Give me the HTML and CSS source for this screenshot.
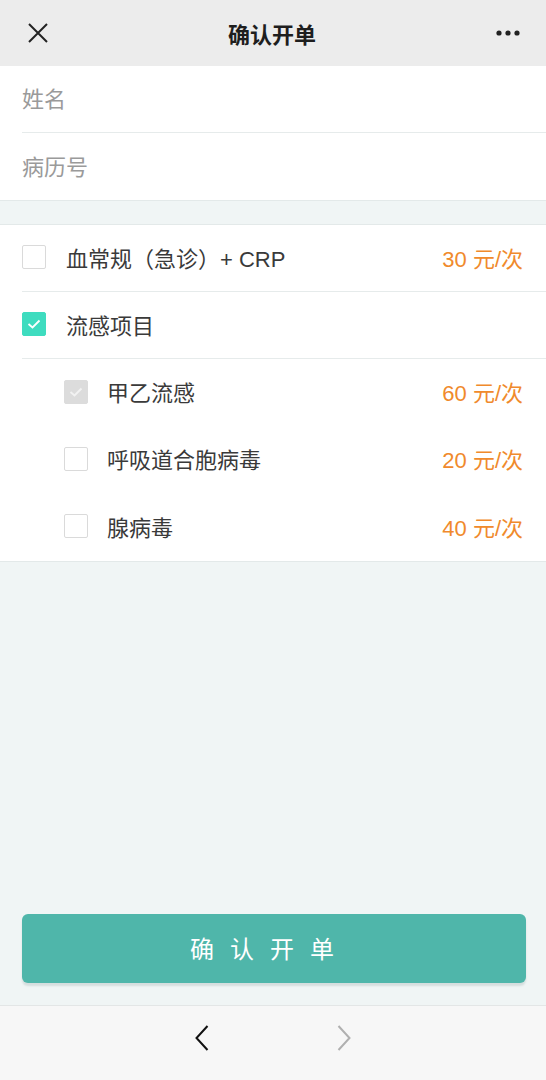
FILE: index.html
```html
<!DOCTYPE html>
<html lang="zh">
<head>
<meta charset="utf-8">
<title>确认开单</title>
<link rel="stylesheet" href="styles.css">
</head>
<body>
<div class="page">
  <header class="topbar">
    <svg class="icon-close" width="20" height="20" viewBox="0 0 20 20"><path d="M1 1 L19 19 M19 1 L1 19" stroke="#222" stroke-width="2" fill="none"/></svg>
    <div class="title">确认开单</div>
    <svg class="icon-more" width="24" height="6" viewBox="0 0 24 6"><circle cx="3" cy="3" r="2.6" fill="#222"/><circle cx="12" cy="3" r="2.6" fill="#222"/><circle cx="21" cy="3" r="2.6" fill="#222"/></svg>
  </header>

  <section class="form">
    <div class="row"><div class="row-inner"><span class="label">姓名</span></div></div>
    <div class="row"><div class="row-inner last"><span class="label">病历号</span></div></div>
  </section>

  <div class="gap"></div>

  <section class="list">
    <div class="row"><div class="row-inner">
      <span class="cb"></span>
      <span class="name">血常规（急诊）+ CRP</span>
      <span class="price">30 元/次</span>
    </div></div>
    <div class="row"><div class="row-inner">
      <span class="cb on"><svg width="14" height="10" viewBox="0 0 14 10"><path d="M1.5 5 L5.5 8.5 L12.5 1.5" stroke="#fff" stroke-width="1.8" fill="none"/></svg></span>
      <span class="name">流感项目</span>
    </div></div>
    <div class="row sub"><div class="row-inner last">
      <span class="cb dis"><svg width="14" height="10" viewBox="0 0 14 10"><path d="M1.5 5 L5.5 8.5 L12.5 1.5" stroke="#f2f2f2" stroke-width="1.8" fill="none"/></svg></span>
      <span class="name">甲乙流感</span>
      <span class="price">60 元/次</span>
    </div></div>
    <div class="row sub"><div class="row-inner last">
      <span class="cb"></span>
      <span class="name">呼吸道合胞病毒</span>
      <span class="price">20 元/次</span>
    </div></div>
    <div class="row sub"><div class="row-inner last">
      <span class="cb"></span>
      <span class="name">腺病毒</span>
      <span class="price">40 元/次</span>
    </div></div>
  </section>

  <div class="spacer"></div>

  <div class="action">
    <button class="btn">确认开单</button>
  </div>

  <nav class="navbar">
    <svg width="14" height="26" viewBox="0 0 14 26"><path d="M12.5 1 L1.5 13 L12.5 25" stroke="#111" stroke-width="2" fill="none"/></svg>
    <svg width="14" height="26" viewBox="0 0 14 26"><path d="M1.5 1 L12.5 13 L1.5 25" stroke="#b0b0b0" stroke-width="2" fill="none"/></svg>
  </nav>
</div>
</body>
</html>
```

FILE: styles.css
```css
* { box-sizing: border-box; }
html, body { margin: 0; padding: 0; }
body {
  background: #f0f5f5;
  font-family: "Liberation Sans", "Noto Sans CJK SC", sans-serif;
  color: #333;
}
.page {
  width: 546px;
  height: 1080px;
  display: flex;
  flex-direction: column;
}
.topbar {
  height: 66px;
  flex: none;
  background: #ececec;
  display: flex;
  align-items: center;
  justify-content: space-between;
  padding: 0 26px 0 28px;
}
.title {
  font-size: 22px;
  font-weight: bold;
  color: #1e1e1e;
}

.form, .list {
  background: #fff;
  flex: none;
}
.form { border-bottom: 1px solid #e3e9e9; }
.gap {
  height: 24px;
  flex: none;
  border-bottom: 1px solid #e3e9e9;
}
.list { border-bottom: 1px solid #e3e9e9; }

.row { padding-left: 22px; }
.row-inner {
  height: 67px;
  display: flex;
  align-items: center;
  border-bottom: 1px solid #e6ebeb;
  padding-right: 23px;
  padding-bottom: 2px;
}
.row-inner.last { border-bottom: none; }

.label {
  font-size: 22px;
  color: #9a9a9a;
  margin-bottom: 2px;
}
.sub { padding-left: 64px; }
.list .row.sub:last-child .row-inner { height: 68px; }

.cb {
  width: 24px;
  height: 24px;
  flex: none;
  border: 1px solid #dadada;
  border-radius: 2px;
  background: #fff;
  display: flex;
  align-items: center;
  justify-content: center;
}
.cb.on { background: #3edcbf; border-color: #3edcbf; }
.cb.dis { background: #dcdcdc; border-color: #dcdcdc; }
.name {
  font-size: 22px;
  color: #3a3a3a;
  margin-left: 20px;
  margin-bottom: 1px;
  flex: 1;
}
.sub .name { margin-left: 19px; }
.price {
  font-size: 22px;
  color: #f08a2c;
  margin-bottom: 1px;
}

.spacer { flex: 1; }
.action {
  padding: 0 20px 22px 22px;
  flex: none;
}
.btn {
  width: 100%;
  height: 69px;
  border: none;
  border-radius: 6px;
  background: #4fb6aa;
  color: #fff;
  font-family: "Noto Sans CJK SC", sans-serif;
  font-size: 24px;
  letter-spacing: 16px;
  padding: 0 8px 2px 0;
  box-shadow: 0 3px 2px #d5dede;
  display: block;
}
.navbar {
  height: 75px;
  flex: none;
  background: #f7f7f7;
  border-top: 1px solid #e3e6e6;
  display: flex;
  align-items: center;
  justify-content: center;
  gap: 128px;
  padding-bottom: 10px;
}
```
